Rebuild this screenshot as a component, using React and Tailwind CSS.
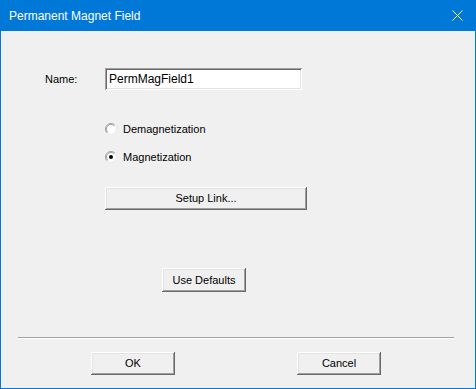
import React from 'react';

const raised =
  'shadow-[inset_-1px_-1px_#696969,inset_1px_1px_#ffffff,inset_-2px_-2px_#a0a0a0,inset_2px_2px_#e3e3e3]';

function Radio({ checked }) {
  return (
    <svg width="12" height="12" viewBox="0 0 12 12" className="shrink-0">
      <circle cx="6" cy="6" r="5.5" fill="#ffffff" />
      <path d="M9.9 2.1 A5.5 5.5 0 0 0 2.1 9.9" fill="none" stroke="#a0a0a0" strokeWidth="1" />
      <path d="M2.1 9.9 A5.5 5.5 0 0 0 9.9 2.1" fill="none" stroke="#e8e8e8" strokeWidth="1" />
      <path d="M9.2 2.8 A4.5 4.5 0 0 0 2.8 9.2" fill="none" stroke="#8a8a8a" strokeWidth="0.8" />
      {checked && <circle cx="6" cy="6" r="2" fill="#000000" />}
    </svg>
  );
}

function Button({ children, className = '' }) {
  return (
    <button className={`h-[23px] bg-[#f0f0f0] text-[11px] text-black ${raised} ${className}`}>
      {children}
    </button>
  );
}

export default function App() {
  return (
    <div className="w-[476px] h-[389px] flex flex-col bg-[#0078d7] font-['Liberation_Sans',Arial,sans-serif] overflow-hidden">
      {/* Title bar */}
      <div className="h-[31px] shrink-0 flex items-center justify-between pl-[9px] pr-[13px] text-white text-[12px]">
        <span>Permanent Magnet Field</span>
        <svg width="11" height="11" viewBox="0 0 11 11">
          <path d="M0.5 0.5 L10.5 10.5 M10.5 0.5 L0.5 10.5" stroke="#ffffff" strokeWidth="1" />
        </svg>
      </div>

      {/* Body */}
      <div className="flex-1 mx-[1px] mb-[1px] bg-[#f0f0f0] flex flex-col text-[11px] text-black">
        <div className="flex items-center mt-[37px] pl-[44px]">
          <span className="w-[60px]">Name:</span>
          <div className="w-[197px] h-[22px] bg-white flex items-center pl-[4px] shadow-[inset_1px_1px_#a0a0a0,inset_-1px_-1px_#ffffff,inset_2px_2px_#696969,inset_-2px_-2px_#e3e3e3] text-[12px]">
            PermMagField1
          </div>
        </div>

        <div className="flex flex-col pl-[104px] mt-[31px] gap-[12px]">
          <label className="h-[16px] flex items-center gap-[6px]">
            <Radio />
            <span>Demagnetization</span>
          </label>
          <label className="h-[16px] flex items-center gap-[6px]">
            <Radio checked />
            <span>Magnetization</span>
          </label>
        </div>

        <div className="pl-[104px] mt-[22px]">
          <Button className="w-[202px]">Setup Link...</Button>
        </div>

        <div className="pl-[161px] mt-[58px]">
          <Button className="w-[84px] h-[24px]">Use Defaults</Button>
        </div>

        <div className="mt-[45px] ml-[17px] w-[436px] h-[2px] border-t border-[#a0a0a0] bg-white" />

        <div className="flex mt-[13px] pl-[90px] gap-[122px]">
          <Button className="w-[84px]">OK</Button>
          <Button className="w-[84px]">Cancel</Button>
        </div>
      </div>
    </div>
  );
}
